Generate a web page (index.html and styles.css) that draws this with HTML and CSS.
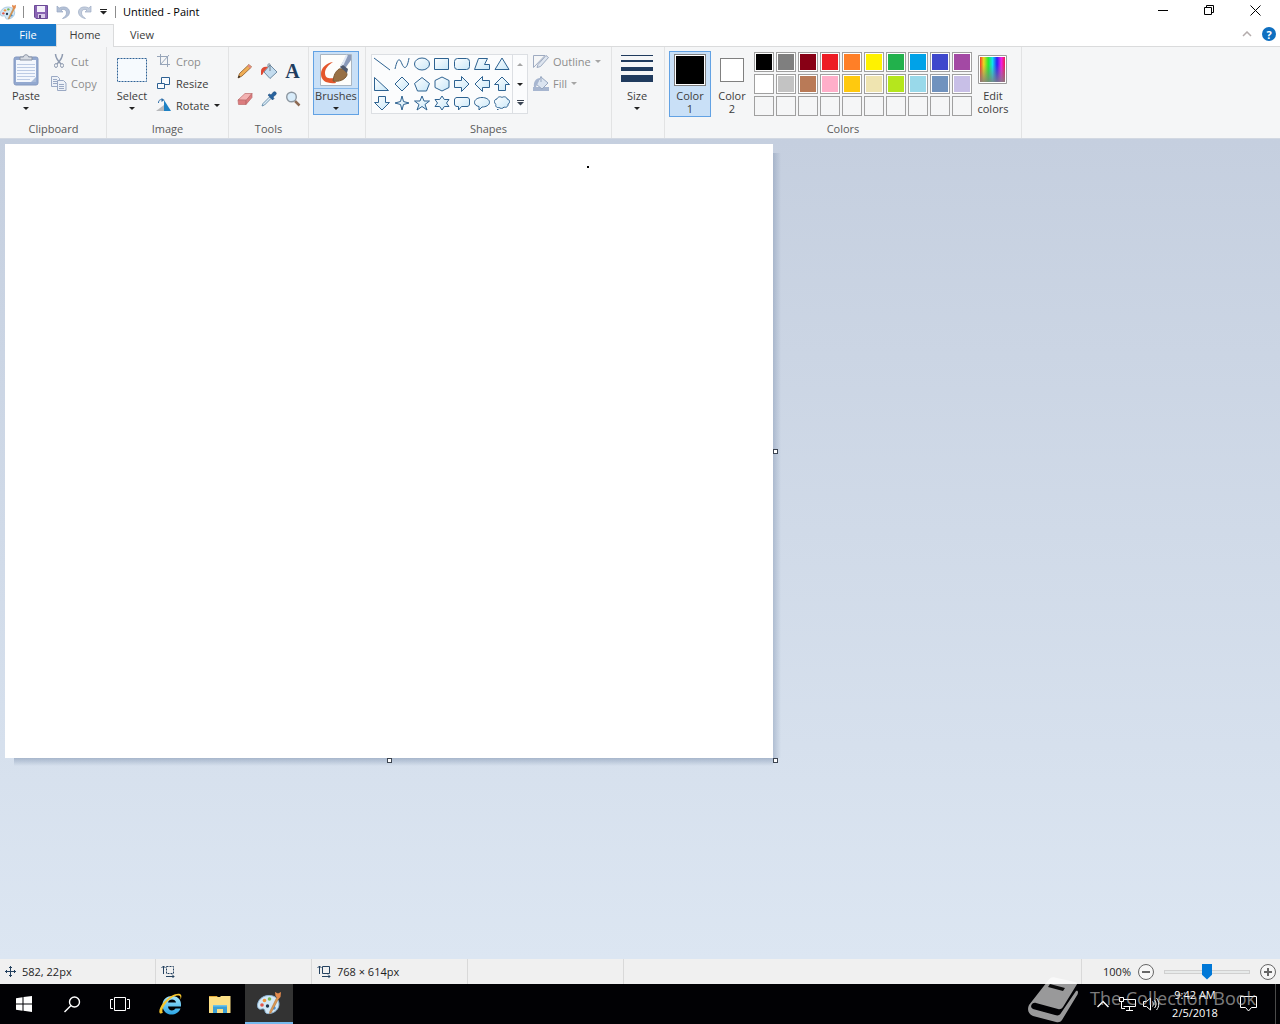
FILE: index.html
```html
<!DOCTYPE html>
<html lang="en">
<head>
    <meta charset="UTF-8">
    <meta name="viewport" content="width=device-width, initial-scale=1.0">
    <title>Untitled - Paint</title>
    <link rel="stylesheet" href="styles.css">
</head>
<body>
    <!-- Shared icons -->
    <svg class="defs" aria-hidden="true">
        <defs>
            <linearGradient id="shape-fill" x1="0" y1="0" x2="1" y2="1">
                <stop offset="0" stop-color="#ffffff"/>
                <stop offset="1" stop-color="#c8e7f8"/>
            </linearGradient>
            <linearGradient id="rainbow">
                <stop offset="0" stop-color="#f0392a"/>
                <stop offset=".15" stop-color="#f0d820"/>
                <stop offset=".33" stop-color="#25e833"/>
                <stop offset=".5" stop-color="#10e0f0"/>
                <stop offset=".68" stop-color="#2a1ff8"/>
                <stop offset=".85" stop-color="#f01fe8"/>
                <stop offset="1" stop-color="#e8204a"/>
            </linearGradient>
            <linearGradient id="grey-fade" x1="0" y1="0" x2="0" y2="1">
                <stop offset=".3" stop-color="#808080" stop-opacity="0"/>
                <stop offset="1" stop-color="#808080" stop-opacity=".85"/>
            </linearGradient>
            <linearGradient id="ie-blue" x1="0" y1="0" x2="0" y2="1">
                <stop offset="0" stop-color="#a5e6fd"/>
                <stop offset="1" stop-color="#2ba6e6"/>
            </linearGradient>
        </defs>
        <symbol id="paint" viewBox="0 0 24 24">
            <path d="M11 4.500C5 5 .5 9.500.5 14.500c0 3.500 2.500 4 4 3.500 2-.6 3.500 0 3.500 2 0 2 2 3 5 2.500 5-.8 9-4.500 9-9.500 0-5.500-5-9-11-8.500z" fill="#d3e8f6" stroke="#8fb6d6"/>
            <circle cx="5" cy="14" r="1.800" fill="#e2574c"/>
            <circle cx="7.500" cy="9.500" r="1.800" fill="#f0963c"/>
            <circle cx="12.500" cy="8" r="1.800" fill="#79b654"/>
            <circle cx="10.500" cy="15" r="1.700" fill="#20364f"/>
            <circle cx="17" cy="17" r="1.800" fill="#4a94d8"/>
            <path d="M20 6l2 1-8 15-1.500.5.3-2z" fill="#dc9a55" stroke="#a8672c" stroke-width=".5"/>
            <path d="M18.500 5L18 1l3 1.500L24 1l-.5 5-2 2z" fill="#e38a4d"/>
        </symbol>
    </svg>

    <header class="titlebar">
        <svg class="app-icon" width="16" height="16"><use href="#paint"/></svg>
        <span class="divider"></span>
        <button class="quick" aria-label="Save">
            <svg width="14" height="14" viewBox="0 0 14 14"><path d="M.5.5h13v13H2L.5 12z" fill="#8a64b4" stroke="#6c4a97"/><path d="M3 1h8v6H3z" fill="#f3effa"/><path d="M4 9h7v4H4z" fill="#d9cbe9"/><path d="M5 10h2v3H5z" fill="#5d4482"/></svg>
        </button>
        <button class="quick" aria-label="Undo">
            <svg width="14" height="15" viewBox="0 0 14 15"><path d="M1 1v6h6L5 5c3-1.500 5.500 0 5.500 3 0 2-1.500 4-4 5.500 4-.6 7-3 7-6.500C13.500 2.500 8 .5 3.200 3z" fill="#b3c0d6" stroke="#98a8c3" stroke-width=".7"/></svg>
        </button>
        <button class="quick" aria-label="Redo">
            <svg width="14" height="15" viewBox="0 0 14 15"><path d="M13 1v6H7l2-2C6 3.500 3.500 5 3.500 8c0 2 1.500 4 4 5.500-4-.6-7-3-7-6.500C.5 2.500 6 .5 10.800 3z" fill="#c3cddd" stroke="#9fadc5" stroke-width=".7"/></svg>
        </button>
        <button class="quick quick-menu" aria-label="Customize Quick Access Toolbar">
            <svg width="7" height="6" viewBox="0 0 7 6"><path d="M0 0h7v1H0zM0 2h7L3.500 5.500z" fill="#222"/></svg>
        </button>
        <span class="divider"></span>
        <h1 class="window-title">Untitled - Paint</h1>
        <div class="window-controls">
            <button aria-label="Minimize"><svg width="10" height="10"><path d="M0 5.500h10" stroke="#000"/></svg></button>
            <button aria-label="Restore"><svg width="10" height="10" fill="none" stroke="#000"><path d="M.5 2.500h7v7h-7zM2.500 2.500v-2h7v7h-2"/></svg></button>
            <button aria-label="Close"><svg width="11" height="11"><path d="M.5.5l10 10M10.500.5l-10 10" stroke="#000"/></svg></button>
        </div>
    </header>

    <nav class="tabs">
        <button class="tab file">File</button>
        <button class="tab active">Home</button>
        <button class="tab">View</button>
        <div class="tab-tools">
            <button aria-label="Minimize the Ribbon"><svg width="10" height="6" fill="none"><path d="M1 5l4-4 4 4" stroke="#b4acac" stroke-width="1.500"/></svg></button>
            <button class="help" aria-label="Help">?</button>
        </div>
    </nav>

    <section class="ribbon">
        <div class="group clipboard">
            <div class="group-body">
                <button class="big">
                    <span class="big-icon"><svg width="26" height="32" viewBox="0 0 26 32"><rect x="1" y="3" width="24" height="28" rx="2" fill="#93a9d0" stroke="#8398c0"/><path d="M3 6h20v22H3z" fill="#f3f7fd"/><path d="M4 10.500h18M4 13.500h18M4 16.500h18M4 19.500h18M4 22.500h18M4 25.500h13" stroke="#bccbe4"/><path d="M18 28l5-5v5z" fill="#a9bbd9"/><path d="M7 6V3h3.500c0-3 5-3 5 0H19v3z" fill="#d6dbe3" stroke="#8a93a3"/></svg></span>
                    <span>Paste</span>
                    <i class="arrow"></i>
                </button>
                <div class="rows">
                    <button class="small" disabled>
                        <svg width="16" height="16" viewBox="0 0 16 16" fill="none" stroke="#8f9bb0"><path d="M4.500 1c0 4 1.500 6 5.500 10M11.500 1c0 4-1.500 6-5.500 10" stroke-width="1.500"/><ellipse cx="5" cy="12.500" rx="1.500" ry="2"/><ellipse cx="11" cy="12.500" rx="1.500" ry="2"/></svg>
                        Cut
                    </button>
                    <button class="small" disabled>
                        <svg width="16" height="16" viewBox="0 0 16 16" fill="#eef2f8" stroke="#9aa9c4"><path d="M.5 1.500h6l2 2v8h-8z"/><path d="M2 4.500h4M2 6.500h4M2 8.500h4"/><path d="M6.500 5.500h6l2.500 2.500v7.500H6.500z"/><path d="M8 9.500h5M8 11.500h5M8 13.500h5"/></svg>
                        Copy
                    </button>
                </div>
            </div>
            <h2>Clipboard</h2>
        </div>

        <div class="group image">
            <div class="group-body">
                <button class="big">
                    <span class="big-icon"><svg width="32" height="32" fill="#f6fafe"><rect x="1.500" y="4.500" width="29" height="23" stroke="#2f6296" stroke-dasharray="2 1"/></svg></span>
                    <span>Select</span>
                    <i class="arrow"></i>
                </button>
                <div class="rows">
                    <button class="small" disabled>
                        <svg width="16" height="16" viewBox="0 0 16 16" fill="none" stroke="#97a5b9"><path d="M4.500 1v10.500H14M1 3.500h10.500V14M4 12l9-10"/></svg>
                        Crop
                    </button>
                    <button class="small">
                        <svg width="16" height="16" viewBox="0 0 16 16" fill="#f8fbfe" stroke="#2d6193"><path d="M5.500 2.500h8v7h-8z"/><path d="M1.500 8.500h7v5h-7z"/></svg>
                        Resize
                    </button>
                    <button class="small">
                        <svg width="16" height="16" viewBox="0 0 16 16"><path d="M0 14l8-6v6z" fill="#b7b9bc"/><path d="M8 14V3l7 11z" fill="#1d81c4"/><path d="M2.500 6c0-3 2-4 4-3" fill="none" stroke="#2f6ea8"/><path d="M5.500 1l3 2-3 2z" fill="#2f6ea8"/></svg>
                        Rotate <i class="arrow"></i>
                    </button>
                </div>
            </div>
            <h2>Image</h2>
        </div>

        <div class="group tools">
            <div class="group-body tool-grid">
                <button aria-label="Pencil"><svg width="16" height="16" viewBox="0 0 16 16"><path d="M1 15l1.500-4.500L12 1.500 14.500 4 5 13z" fill="#efad55" stroke="#8b5c2c" stroke-width=".8"/><path d="M12 1.500L14.500 4l-1.500 1.500L10.500 3z" fill="#e38a83"/><path d="M1 15l.8-2.500L3.500 14z" fill="#222"/></svg></button>
                <button aria-label="Fill with color"><svg width="18" height="16" viewBox="0 0 18 16"><path d="M10 2l7 7-7 6.500L4 9z" fill="#c3dcef" stroke="#54748f" stroke-width=".8"/><path d="M10 8V2c0-2-2-1.500-2 0v2" fill="none" stroke="#6b7f90"/><path d="M8 4C4 3 1 5 1 8v4c2 0 2-2 3-3.500z" fill="#dd4b35"/></svg></button>
                <button class="text-tool" aria-label="Text">A</button>
                <button aria-label="Eraser"><svg width="16" height="16" viewBox="0 0 16 16"><path d="M1 9l7-6.500h7L9 9.500z" fill="#f3b2b2" stroke="#bc6c6c" stroke-width=".7"/><path d="M1 9h8v4.500H1.500zM9 9.500l6-7v4L9 13.500z" fill="#dc7c7e" stroke="#bc6c6c" stroke-width=".7"/></svg></button>
                <button aria-label="Color picker"><svg width="16" height="16" viewBox="0 0 16 16"><path d="M8.500 6L10 7.500 3.500 14 1 15l1-2.500z" fill="#d9eaf6" stroke="#54809f" stroke-width=".8"/><path d="M7 4l1.500-1 1.500 1 2.500-3c2-1 3.500 1 2.500 2.500L12 6l1 1.500L11.500 9z" fill="#27639f" stroke="#1b4a7a" stroke-width=".6"/></svg></button>
                <button aria-label="Magnifier"><svg width="16" height="16" viewBox="0 0 16 16"><path d="M10 10l4.500 4.500" stroke="#8d6a53" stroke-width="2.500"/><circle cx="6.500" cy="6" r="4.800" fill="#d8ecfa" stroke="#8d97a1" stroke-width="1.400"/></svg></button>
            </div>
            <h2>Tools</h2>
        </div>

        <div class="group brushes">
            <div class="group-body">
                <button class="big selected brush-button">
                    <span class="big-icon brush-icon"><svg width="32" height="32" viewBox="0 0 32 32"><path d="M.5.5h31v31H.5z" fill="#fdfdfb" stroke="#a9b5c1"/><path d="M24 16L31 6V1h-4l-7 12z" fill="#8b9bbb"/><path d="M21 14l6-13" stroke="#dfe7f3" stroke-width="2"/><path d="M13 8C6 9 1 14 1 20c0 7 6 10 15 9l-2-5c-5 1-9 0-9-5 0-4 3-8 8-11z" fill="#e4572c"/><path d="M13 27c1-6 2-9 6-12 4-1 8 2 8 6-2 5-8 7-14 6z" fill="#987044" stroke="#7d5a34"/><path d="M20 13l7 6 1-4-5-4z" fill="#4f596e"/></svg></span>
                    <span>Brushes</span>
                    <i class="arrow"></i>
                </button>
            </div>
        </div>

        <div class="group shapes">
            <div class="group-body">
                <div class="gallery">
                    <div class="shape-grid">
                        <button aria-label="Line"><svg><path d="M0 2l16 12"/></svg></button>
                        <button aria-label="Curve"><svg><path d="M1 13C4 0 6 3 8 8s5 6 7-6" fill="none"/></svg></button>
                        <button aria-label="Oval"><svg><ellipse cx="8" cy="8" rx="7.500" ry="6"/></svg></button>
                        <button aria-label="Rectangle"><svg><path d="M.5 2.500h14v11H.5z"/></svg></button>
                        <button aria-label="Rounded rectangle"><svg><rect x=".5" y="2.500" width="15" height="11" rx="3"/></svg></button>
                        <button aria-label="Polygon"><svg><path d="M4.500 2.500h9l-3 6h5v5H.5z"/></svg></button>
                        <button aria-label="Triangle"><svg><path d="M8 2l7 11.500H1z"/></svg></button>
                        <button aria-label="Right triangle"><svg><path d="M.5 1.500v13h14z"/></svg></button>
                        <button aria-label="Diamond"><svg><path d="M8 1l7 7-7 7-7-7z"/></svg></button>
                        <button aria-label="Pentagon"><svg><path d="M8 1.500l7.500 6-3 7.500h-9l-3-7.500z"/></svg></button>
                        <button aria-label="Hexagon"><svg><path d="M8 1l7 3.500v7L8 15l-7-3.500v-7z"/></svg></button>
                        <button aria-label="Right arrow"><svg><path d="M.5 4.500h7v-4L15 8l-7.500 7.500v-4h-7z"/></svg></button>
                        <button aria-label="Left arrow"><svg><path d="M15.500 4.500h-7v-4L1 8l7.500 7.500v-4h7z"/></svg></button>
                        <button aria-label="Up arrow"><svg><path d="M4.500 14.500v-6h-4L8 1l7.500 7.500h-4v6z"/></svg></button>
                        <button aria-label="Down arrow"><svg><path d="M4.500 1.500v6h-4L8 15l7.500-7.500h-4v-6z"/></svg></button>
                        <button aria-label="Four-point star"><svg><path d="M8 1l1.500 5.500L15 8 9.500 9.500 8 15 6.500 9.500 1 8l5.500-1.500z"/></svg></button>
                        <button aria-label="Five-point star"><svg><path d="M8 1l2 5h5.500L11 9.500l2 5.500-5-3.500L3 15l2-5.500L.5 6H6z"/></svg></button>
                        <button aria-label="Six-point star"><svg><path d="M8 1l2.300 3.500H15L12.500 8l2.500 3.500h-4.700L8 15l-2.300-3.500H1L3.500 8 1 4.500h4.700z"/></svg></button>
                        <button aria-label="Rounded callout"><svg><path d="M3 2.500h10c1.500 0 2.500 1 2.500 2.500v4c0 1.500-1 2.500-2.500 2.500H7.500L4.500 15v-3.500H3C1.500 11.500.5 10.500.5 9V5c0-1.500 1-2.500 2.500-2.500z"/></svg></button>
                        <button aria-label="Oval callout"><svg><path d="M8 2.500c4 0 7.500 2 7.500 4.800S12 12 8 12l-3 3v-3.500C2 11 .5 9.500.5 7.300.5 4.500 4 2.500 8 2.500z"/></svg></button>
                        <button aria-label="Cloud callout"><svg><path d="M3 4c.5-2 3-3 5-1.500C10 1 13 2 13 4c3 .5 3.500 4 1 5 .5 2.500-2 4-4 3-1 2-4 1.500-5 .5-2 .5-4-1-3-3C0 8-.5 4.500 3 4zM3 14.500h1.500"/></svg></button>
                    </div>
                    <div class="gallery-scroll">
                        <button aria-label="Scroll up" disabled><i class="arrow up"></i></button>
                        <button aria-label="Scroll down"><i class="arrow"></i></button>
                        <button aria-label="More shapes"><svg width="7" height="6" viewBox="0 0 7 6"><path d="M0 0h7v1H0zM0 2h7L3.500 5.500z" fill="#3c4654"/></svg></button>
                    </div>
                </div>
                <div class="rows">
                    <button class="small" disabled>
                        <svg width="16" height="16" viewBox="0 0 16 16" fill="none" stroke="#9eabc1"><path d="M12 2.500H.5v12L12 2.500"/><path d="M4 14.500l1-3 8-9 2.500 2-8 9z" fill="#dfe6f0"/></svg>
                        Outline <i class="arrow"></i>
                    </button>
                    <button class="small" disabled>
                        <svg width="16" height="16" viewBox="0 0 16 16"><path d="M0 12h16v4H0z" fill="#a7b6d0"/><path d="M8 2l7 6-6 6-6-5z" fill="#dbe4f0" stroke="#97a7c0"/><path d="M7 3C3 3 0 7 1 12h2l2-4z" fill="#a7b6d0"/><path d="M8 7V1" stroke="#97a7c0"/></svg>
                        Fill <i class="arrow"></i>
                    </button>
                </div>
            </div>
            <h2>Shapes</h2>
        </div>

        <div class="group size">
            <div class="group-body">
                <button class="big">
                    <span class="big-icon"><svg width="32" height="32" fill="#203b5e"><path d="M0 1h32v1H0zM0 6h32v2H0zM0 13h32v4H0zM0 21h32v7H0z"/></svg></span>
                    <span>Size</span>
                    <i class="arrow"></i>
                </button>
            </div>
        </div>

        <div class="group colors">
            <div class="group-body">
                <button class="big selected">
                    <span class="big-icon"><i class="current black"></i></span>
                    <span>Color<br>1</span>
                </button>
                <button class="big">
                    <span class="big-icon"><i class="current second white"></i></span>
                    <span>Color<br>2</span>
                </button>
                <div class="palette">
                    <button class="swatch black" aria-label="Black"></button>
                    <button class="swatch gray-50" aria-label="Gray-50%"></button>
                    <button class="swatch dark-red" aria-label="Dark red"></button>
                    <button class="swatch red" aria-label="Red"></button>
                    <button class="swatch orange" aria-label="Orange"></button>
                    <button class="swatch yellow" aria-label="Yellow"></button>
                    <button class="swatch green" aria-label="Green"></button>
                    <button class="swatch turquoise" aria-label="Turquoise"></button>
                    <button class="swatch indigo" aria-label="Indigo"></button>
                    <button class="swatch purple" aria-label="Purple"></button>
                    <button class="swatch white" aria-label="White"></button>
                    <button class="swatch gray-25" aria-label="Gray-25%"></button>
                    <button class="swatch brown" aria-label="Brown"></button>
                    <button class="swatch rose" aria-label="Rose"></button>
                    <button class="swatch gold" aria-label="Gold"></button>
                    <button class="swatch light-yellow" aria-label="Light yellow"></button>
                    <button class="swatch lime" aria-label="Lime"></button>
                    <button class="swatch light-turquoise" aria-label="Light turquoise"></button>
                    <button class="swatch blue-gray" aria-label="Blue-gray"></button>
                    <button class="swatch lavender" aria-label="Lavender"></button>
                    <button class="swatch empty" aria-label="Custom color 1"></button>
                    <button class="swatch empty" aria-label="Custom color 2"></button>
                    <button class="swatch empty" aria-label="Custom color 3"></button>
                    <button class="swatch empty" aria-label="Custom color 4"></button>
                    <button class="swatch empty" aria-label="Custom color 5"></button>
                    <button class="swatch empty" aria-label="Custom color 6"></button>
                    <button class="swatch empty" aria-label="Custom color 7"></button>
                    <button class="swatch empty" aria-label="Custom color 8"></button>
                    <button class="swatch empty" aria-label="Custom color 9"></button>
                    <button class="swatch empty" aria-label="Custom color 10"></button>
                </div>
                <button class="big">
                    <span class="big-icon"><svg width="30" height="30"><path d="M.5.500h28v28H.5z" fill="#fff" stroke="#9b9b9b"/><path d="M2 2h25v25H2z" fill="url(#rainbow)"/><path d="M2 2h25v25H2z" fill="url(#grey-fade)"/></svg></span>
                    <span>Edit<br>colors</span>
                </button>
            </div>
            <h2>Colors</h2>
        </div>
    </section>

    <main class="workspace">
        <div class="paper">
            <canvas width="768" height="614"></canvas>
            <span class="handle right"></span>
            <span class="handle bottom"></span>
            <span class="handle corner"></span>
            <span class="pointer"></span>
        </div>
    </main>

    <footer class="statusbar">
        <div class="status-cell">
            <svg width="11" height="11" fill="none" stroke="#24415f"><path d="M5.500 0v11M0 5.500h11M4 2l1.500-1.500L7 2M4 9l1.500 1.500L7 9M2 4L.5 5.500 2 7M9 4l1.500 1.500L9 7"/></svg>
            582, 22px
        </div>
        <div class="status-cell">
            <svg width="14" height="13" fill="none" stroke="#24415f"><path d="M2.500 1v8M.5 3l2-2 2 2M5 11.500h8M11 9.500l2 2-2 2"/><path d="M5.500 1.500h7v7h-7z" stroke-dasharray="2 1"/></svg>
        </div>
        <div class="status-cell">
            <svg width="14" height="13" fill="none" stroke="#24415f"><path d="M2.500 1v8M.5 3l2-2 2 2M5 11.500h8M11 9.500l2 2-2 2M5.500 1.500h7v7h-7z"/></svg>
            768 × 614px
        </div>
        <div class="status-cell"></div>
        <div class="zoom">
            <label for="zoom">100%</label>
            <button aria-label="Zoom out"><svg width="16" height="16" fill="#f6f6f6" stroke="#666"><circle cx="8" cy="8" r="7.500"/><path d="M4 8h8" stroke-width="2"/></svg></button>
            <input type="range" id="zoom" min="0" max="100" value="50">
            <button aria-label="Zoom in"><svg width="16" height="16" fill="#f6f6f6" stroke="#666"><circle cx="8" cy="8" r="7.500"/><path d="M4 8h8M8 4v8" stroke-width="2"/></svg></button>
        </div>
    </footer>

    <div class="taskbar">
        <button class="task" aria-label="Start"><svg width="16" height="16" fill="#fff"><path d="M0 2.300L6.500 1.300v6.200H0zM7.500 1.100L16 0v7.500H7.500zM0 8.500h6.500v6.200L0 13.700zM7.500 8.500H16V16l-8.500-1.200z"/></svg></button>
        <button class="task" aria-label="Search"><svg width="17" height="17" fill="none" stroke="#fff" stroke-width="1.400"><circle cx="10.500" cy="6" r="5"/><path d="M7 9.500L.5 16"/></svg></button>
        <button class="task" aria-label="Task View"><svg width="20" height="14" fill="none" stroke="#fff"><path d="M4.500.5h11v13h-11zM3 2.500H.5v9H3M17 2.500h2.500v9H17"/></svg></button>
        <div class="pinned">
            <button class="task" aria-label="Internet Explorer"><svg width="24" height="24" viewBox="0 0 24 24"><path d="M22 14.500H9c.3 4.500 5.500 5 7.500 2h5C18 25.500 3.500 24.500 3.500 13 3.500 1.500 21.500 1 22 12z" fill="url(#ie-blue)"/><path d="M9 10.500h8c-.5-4-7.300-4-8 0z" fill="#02030a"/><path d="M4 20.500C-1 24-1 17 4.500 10.500 10 4 18 .5 21 2c2 1 1.500 3.500.5 5.500 0-2 .2-3.200-1-3.800C18 2.500 12 5 7.500 10.500 3.500 15 2.500 20 4 20.500z" fill="#f6c52e"/></svg></button>
            <button class="task" aria-label="File Explorer"><svg width="22" height="19" viewBox="0 0 22 19"><path d="M0 1h8l1.500 2H0z" fill="#e2a938"/><path d="M0 2h11l1-1h9.500v17H0z" fill="#fbdf86"/><path d="M4 10h14v8h-4v-4H8v4H4z" fill="#3a9fd5"/><path d="M4 10h14v1.500H4z" fill="#6cc3ea"/></svg></button>
            <button class="task running" aria-label="Paint"><svg width="24" height="24"><use href="#paint"/></svg></button>
        </div>
        <div class="tray">
            <button aria-label="Show hidden icons"><svg width="12" height="8" fill="none" stroke="#fff" stroke-width="1.500"><path d="M.5 7L6 1.500 11.500 7"/></svg></button>
            <button aria-label="Network"><svg width="17" height="14" fill="none" stroke="#fff"><path d="M4.500 2.500h12v7h-12M.5.5h4v4h-4zM2.500 4.500v7H6M10.500 9.500v4M7 13.500h7"/></svg></button>
            <button aria-label="Volume"><svg width="17" height="14" fill="none" stroke="#fff"><path d="M.5 4.500h3l4-3.500v12l-4-3.500h-3zM9.500 4.500c1 1.500 1 3.500 0 5M11.500 3c2 2.500 2 5.500 0 8M13.500 1c3 3.500 3 8.500 0 12"/></svg></button>
            <div class="clock">9:42 AM<br>2/5/2018</div>
            <button class="action" aria-label="Action Center"><svg width="17" height="16" fill="none" stroke="#fff"><path d="M.5.5h16v11h-5l-3 3.500-3-3.500h-5z"/></svg></button>
            <span class="show-desktop"></span>
        </div>
    </div>

    <div class="watermark">
        <svg width="52" height="48" viewBox="0 0 52 48"><path d="M19 6c2-4 5-5.500 8-4.500L47 6c2 .5 2.500 1.500 1.500 3L35 31c-1.500 2-3 2.500-5 2L8 27c-4-1-7 4-3 6l22 6c3 1 5 0 6-2l15-22c2-1 2.500 1 1.500 3.500L34 44c-1.500 2-3 2.500-6 2L5 40C0 38-1 33 1 29z"/><path class="slot" d="M22 8l15 4-2 3-15-4z"/></svg>
        <span>The Collection Book</span>
    </div>
</body>
</html>
```
FILE: styles.css
```css
* {
    box-sizing: border-box;
}
body {
    display: flex;
    flex-direction: column;
    min-height: 100vh;
    margin: 0;
    position: relative;
    overflow: hidden;
    font-family: "Open Sans", "Noto Sans", sans-serif;
    font-size: 11px;
    color: #3c3c3c;
    background-color: #fff;
    white-space: nowrap;
}
button {
    display: flex;
    align-items: center;
    justify-content: center;
    padding: 0;
    border: none;
    background: none;
    font: inherit;
    color: inherit;
}
svg {
    display: block;
    flex: none;
}
h1, h2 {
    margin: 0;
    font-weight: normal;
    font-size: 11px;
}
.defs {
    position: absolute;
    width: 0;
    height: 0;
}
.arrow {
    width: 0;
    border: 3px solid transparent;
    border-top-color: #222;
    border-bottom: none;
}
.arrow.up {
    border-top: none;
    border-bottom: 3px solid #222;
}

/* Title bar */
.titlebar {
    display: flex;
    align-items: center;
    height: 24px;
}
.app-icon {
    margin-right: 7px;
}
.divider {
    width: 1px;
    height: 12px;
    background-color: #8c8c8c;
}
.quick {
    width: 22px;
    height: 22px;
}
.divider + .quick {
    margin-left: 6px;
}
.quick-menu {
    width: 14px;
    margin-right: 5px;
}
.window-title {
    margin-left: 7px;
    padding-bottom: 2px;
    color: #000;
}
.window-controls {
    display: flex;
    margin-left: auto;
    padding: 0 2px 4px 0;
}
.window-controls button {
    width: 46px;
    height: 20px;
}

/* Tabs */
.tabs {
    display: flex;
    height: 23px;
    border-bottom: 1px solid #dadbdc;
}
.tab {
    width: 56px;
    padding-bottom: 2px;
}
.tab.file {
    height: 22px;
    color: #fff;
    background-color: #1979ca;
}
.tab.active {
    width: 58px;
    height: 23px;
    padding-bottom: 4px;
    border: 1px solid #dadbdc;
    border-bottom: none;
    background-color: #f5f6f7;
}
.tab-tools {
    display: flex;
    align-items: center;
    gap: 10px;
    margin-left: auto;
    padding: 0 4px 2px 0;
}
.help {
    width: 14px;
    height: 14px;
    border-radius: 50%;
    background-color: #0f6fc0;
    color: #fff;
    font-weight: bold;
}

/* Ribbon */
.ribbon {
    display: flex;
    height: 92px;
    background-color: #f5f6f7;
    border-bottom: 1px solid #d2d8e2;
}
.group {
    display: flex;
    flex-direction: column;
    border-right: 1px solid #e2e3e4;
    padding: 4px 4px 0;
}
.group h2 {
    line-height: 24px;
    height: 21px;
    text-align: center;
    color: #5a5a5a;
}
.group-body {
    display: flex;
    flex: none;
    height: 66px;
}
.clipboard {
    width: 107px;
    padding-left: 5px;
}
.image {
    width: 122px;
}
.tools {
    width: 80px;
}
.brushes {
    width: 57px;
}
.shapes {
    width: 246px;
}
.size {
    width: 53px;
}
.colors {
    width: 357px;
}
.big {
    display: flex;
    flex: none;
    flex-direction: column;
    justify-content: flex-start;
    width: 42px;
    height: 66px;
    padding-top: 2px;
    border: 1px solid transparent;
    line-height: 13px;
}
.big-icon {
    display: flex;
    align-items: center;
    justify-content: center;
    width: 100%;
    height: 32px;
    margin-bottom: 3px;
}
.big .arrow {
    margin-top: 5px;
}
.selected {
    border-color: #62a2e4;
    background-color: #c9e0f7;
}
.brush-button {
    width: 46px;
    height: 64px;
}
.brush-icon {
    height: 35px;
    padding-bottom: 3px;
    margin-bottom: 0;
    border-bottom: 1px solid #86b8ea;
}
.rows {
    display: flex;
    flex-direction: column;
    margin-left: 4px;
}
.image .rows {
    margin-left: 3px;
}
.shapes .rows {
    margin-left: 3px;
}
.small {
    justify-content: flex-start;
    gap: 4px;
    height: 22px;
    padding-bottom: 2px;
}
.small:disabled {
    color: #8d8d8d;
}
:disabled .arrow {
    border-top-color: #a5a5a5;
}
:disabled .arrow.up {
    border-top: none;
    border-bottom-color: #a5a5a5;
}
.tool-grid {
    display: grid;
    grid-template-columns: repeat(3, 23px);
    grid-template-rows: repeat(2, 28px);
    column-gap: 1px;
    padding-top: 6px;
}
.text-tool {
    font-family: "Liberation Serif", serif;
    font-size: 20px;
    font-weight: bold;
    color: #1f3d5f;
}

/* Shapes */
.gallery {
    display: flex;
    width: 157px;
    height: 60px;
    margin: 3px 2px 0 1px;
    border: 1px solid #dcdfe3;
    background-color: #fbfcfd;
}
.gallery button {
    padding-bottom: 2px;
}
.shape-grid {
    display: grid;
    grid-template-columns: repeat(7, 20px);
    grid-template-rows: 20px 20px 18px;
}
.shape-grid svg {
    width: 16px;
    height: 16px;
    fill: url(#shape-fill);
    stroke: #2d6291;
}
.gallery-scroll {
    display: grid;
    grid-template-rows: 20px 20px 18px;
    flex: 1;
    border-left: 1px solid #dcdfe3;
}

/* Colors */
.current {
    width: 32px;
    height: 32px;
    padding: 1px;
    border: 1px solid #808080;
    background-clip: content-box;
    box-shadow: inset 0 0 0 1px #fff;
}
.current.second {
    width: 24px;
    height: 24px;
}
.palette {
    display: grid;
    grid-template-columns: repeat(10, 20px);
    grid-template-rows: repeat(3, 20px);
    gap: 2px;
    margin: 1px 0 0 1px;
}
.swatch {
    padding: 1px;
    border: 1px solid #a0a0a0;
    background-clip: content-box;
    box-shadow: inset 0 0 0 1px #fff;
}
.swatch.empty {
    box-shadow: none;
}
.black { background-color: #000; }
.gray-50 { background-color: #7f7f7f; }
.dark-red { background-color: #880015; }
.red { background-color: #ed1c24; }
.orange { background-color: #ff7f27; }
.yellow { background-color: #fff200; }
.green { background-color: #22b14c; }
.turquoise { background-color: #00a2e8; }
.indigo { background-color: #3f48cc; }
.purple { background-color: #a349a4; }
.white { background-color: #fff; }
.gray-25 { background-color: #c3c3c3; }
.brown { background-color: #b97a57; }
.rose { background-color: #ffaec9; }
.gold { background-color: #ffc90e; }
.light-yellow { background-color: #efe4b0; }
.lime { background-color: #b5e61d; }
.light-turquoise { background-color: #99d9ea; }
.blue-gray { background-color: #7092be; }
.lavender { background-color: #c8bfe7; }

/* Drawing area */
.workspace {
    flex: 1;
    padding: 5px;
    background: linear-gradient(#c5cfdf, #dce6f2);
}
.paper {
    position: relative;
    width: fit-content;
}
.paper canvas {
    display: block;
    background-color: #fff;
}
.paper::before,
.paper::after {
    content: "";
    position: absolute;
}
.paper::before {
    left: 100%;
    top: 9px;
    bottom: 0;
    width: 8px;
    background: linear-gradient(to right, rgba(120, 140, 170, 0.4), rgba(120, 140, 170, 0));
}
.paper::after {
    left: 9px;
    right: 0;
    top: 100%;
    height: 8px;
    background: linear-gradient(rgba(120, 140, 170, 0.5), rgba(120, 140, 170, 0));
}
.handle {
    position: absolute;
    z-index: 1;
    width: 5px;
    height: 5px;
    border: 1px solid #3c4450;
    background-color: #fff;
}
.handle.right {
    left: 100%;
    top: calc(50% - 2px);
}
.handle.bottom {
    left: calc(50% - 2px);
    top: 100%;
}
.handle.corner {
    left: 100%;
    top: 100%;
}
.pointer {
    position: absolute;
    left: 582px;
    top: 22px;
    width: 2px;
    height: 2px;
    background-color: #000;
}

/* Status bar */
.statusbar {
    display: flex;
    height: 25px;
    color: #1e1e1e;
    background-color: #f0f0f0;
}
.status-cell {
    display: flex;
    align-items: center;
    gap: 6px;
    width: 156px;
    padding-left: 5px;
    border-right: 1px solid #d9d9d9;
}
.zoom {
    display: flex;
    align-items: center;
    margin-left: auto;
    padding: 0 4px 0 21px;
    border-left: 1px solid #d9d9d9;
}
.zoom label {
    margin-right: 7px;
}
.zoom input {
    appearance: none;
    width: 86px;
    height: 16px;
    margin: 0 10px;
    background: none;
}
.zoom input::-webkit-slider-runnable-track {
    height: 4px;
    border: 1px solid #d0d0d0;
    background-color: #e7eaea;
}
.zoom input::-webkit-slider-thumb {
    appearance: none;
    width: 10px;
    height: 16px;
    margin-top: -7px;
    background-color: #0078d7;
    clip-path: polygon(0 0, 100% 0, 100% 70%, 50% 100%, 0 70%);
}

/* Taskbar */
.taskbar {
    display: flex;
    height: 40px;
    color: #fff;
    background-color: #010104;
}
.task {
    width: 48px;
    height: 40px;
}
.pinned {
    display: flex;
    gap: 1px;
    margin-left: 3px;
}
.running {
    background-color: #333;
    border-bottom: 2px solid #76b9ed;
}
.tray {
    display: flex;
    align-items: center;
    margin-left: auto;
}
.tray button {
    width: 24px;
    height: 40px;
}
.clock {
    width: 64px;
    line-height: 18px;
    text-align: center;
}
.tray .action {
    width: 43px;
}
.show-desktop {
    width: 5px;
    height: 40px;
    margin-left: 5px;
    border-left: 1px solid #4a4a4a;
}

.watermark {
    position: absolute;
    right: 24px;
    bottom: 0;
    display: flex;
    align-items: center;
    gap: 10px;
    font-size: 18px;
    color: #ccc;
    opacity: 0.6;
    pointer-events: none;
}
.watermark span {
    padding-bottom: 4px;
}
.watermark svg {
    fill: #fff;
}
.watermark .slot {
    fill: #111;
}
```
